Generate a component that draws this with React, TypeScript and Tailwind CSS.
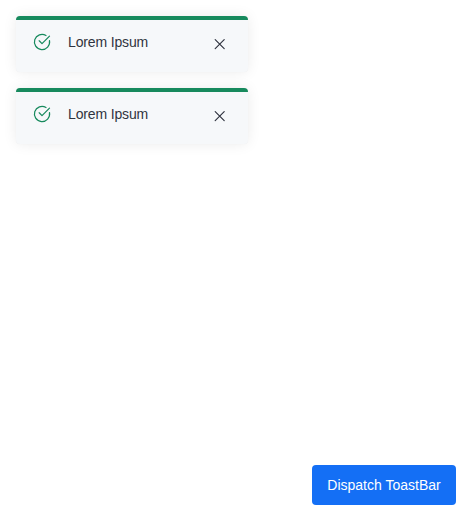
function CheckCircle() {
  return (
    <svg className="mt-3 size-5 shrink-0 text-[#178a5d]" viewBox="0 0 20 20" fill="none" stroke="currentColor" strokeWidth="1.25" strokeLinecap="round" strokeLinejoin="round">
      <path d="M14 3.5A7.6 7.6 0 1 0 17.5 8.7" />
      <path d="M7.2 8.8L10 11.6L17.5 4.1" />
    </svg>
  );
}

function Toast({ message }: { message: string }) {
  return (
    <div className="flex h-14 w-[232px] items-start overflow-hidden rounded border-t-4 border-[#178a5d] bg-[#f6f8fa] pl-4 pr-[22px] shadow-[0_0_1px_rgba(0,0,0,0.06),0_0_14px_rgba(0,0,0,0.08)]">
      <CheckCircle />
      <span className="ml-4 mt-3 flex-1 whitespace-nowrap text-sm leading-5 tracking-[-0.15px]">{message}</span>
      <button aria-label="Close" className="mt-[18px] shrink-0">
        <svg className="size-3" viewBox="0 0 12 12" fill="none" stroke="currentColor" strokeWidth="1.2" strokeLinecap="round">
          <path d="M1.2 1.7L10.2 10.7M10.2 1.7L1.2 10.7" />
        </svg>
      </button>
    </div>
  );
}

export default function App() {
  return (
    <main className="flex h-[521px] w-[472px] flex-col justify-between bg-white p-4 font-['Liberation_Sans',Arial,sans-serif] text-[#303440]">
      <div className="flex flex-col gap-4">
        <Toast message="Lorem Ipsum" />
        <Toast message="Lorem Ipsum" />
      </div>
      <button className="h-10 w-36 self-end whitespace-nowrap rounded bg-[#146ff5] text-sm leading-5 text-white">Dispatch ToastBar</button>
    </main>
  );
}
